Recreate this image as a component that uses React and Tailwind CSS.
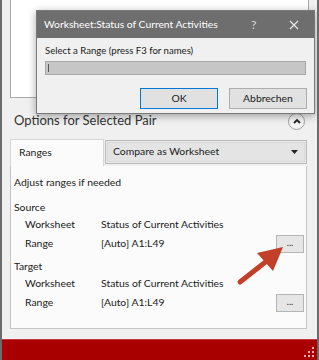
const Row = ({ label, value, button, className = "" }) => (
  <div className={`flex items-center h-[17px] pl-[11px] ${className}`}>
    <span className="w-[76px]">{label}</span>
    <span className="flex-1">{value}</span>
    {button && (
      <div className="w-[28px] h-[18px] mr-[2px] bg-[#e6e6e6] border border-[#b4b4b4] flex items-center justify-center text-[9px] leading-none pb-[3px]">
        ...
      </div>
    )}
  </div>
);

export default function App() {
  return (
    <div className="relative w-[319px] h-[360px] overflow-hidden bg-[#f0f0f0] border-l-2 border-r-2 border-[#6b6b6b] flex flex-col text-[10.4px] text-[#1a1a1a] font-['Lato','Noto_Sans',Arial,sans-serif]">
      {/* upper panel */}
      <div className="ml-[8px] mr-[8px] h-[98px] bg-white border border-t-0 border-[#a9a9a9]"></div>

      {/* options header */}
      <div className="flex items-center justify-between h-[24px] mt-[11px] ml-[12px] mr-[12px]">
        <span className="text-[13px] text-[#333]">Options for Selected Pair</span>
        <div className="w-[17px] h-[17px] rounded-full border border-[#a0a0a0] bg-[#f4f4f4] flex items-center justify-center">
          <svg width="8" height="6" viewBox="0 0 8 6">
            <path d="M1 5 L4 2 L7 5" stroke="#222" strokeWidth="1.8" fill="none" />
          </svg>
        </div>
      </div>

      {/* tabs */}
      <div className="flex items-end ml-[8px] mr-[10px] mt-[6px] h-[27px]">
        <div className="w-[94px] h-[27px] bg-[#fbfbfb] border border-b-0 border-[#d6d6d6] flex items-center pl-[8px]">
          Ranges
        </div>
        <div className="flex-1 h-[24px] mb-[2px] ml-[1px] border border-[#b9b9b9] bg-[#e9e9e9] p-[1px]">
          <div className="h-full border border-[#d8d8d8] bg-[#e4e4e4] flex items-center justify-between pl-[5px] pr-[6px]">
            <span>Compare as Worksheet</span>
            <svg width="7" height="4" viewBox="0 0 7 4">
              <path d="M0 0 H7 L3.5 4 Z" fill="#222" />
            </svg>
          </div>
        </div>
      </div>

      {/* content panel */}
      <div className="ml-[8px] mr-[10px] h-[163px] bg-[#fbfbfb] border border-t-0 border-[#c4c4c4] pt-[8px] pl-[3px]">
        <div className="h-[18px] flex items-center">Adjust ranges if needed</div>
        <div className="h-[17px] mt-[7px] flex items-center">Source</div>
        <Row label="Worksheet" value="Status of Current Activities" />
        <Row label="Range" value="[Auto] A1:L49" button className="mt-[2px]" />
        <div className="h-[17px] mt-[6px] flex items-center">Target</div>
        <Row label="Worksheet" value="Status of Current Activities" />
        <Row label="Range" value="[Auto] A1:L49" button className="mt-[2px]" />
      </div>

      {/* status bar */}
      <div className="mt-auto h-[21px] bg-[#a80000] border-t border-[#c23a3a] -mx-[2px] relative">
        <svg className="absolute right-[4px] bottom-[2px]" width="11" height="11" viewBox="0 0 11 11">
          <g fill="#f0b0b0">
            <rect x="8" y="0" width="2" height="2" />
            <rect x="4" y="4" width="2" height="2" />
            <rect x="8" y="4" width="2" height="2" />
            <rect x="0" y="8" width="2" height="2" />
            <rect x="4" y="8" width="2" height="2" />
            <rect x="8" y="8" width="2" height="2" />
          </g>
        </svg>
      </div>

      {/* dialog overlay */}
      <div className="absolute left-[34px] top-[10px] w-[279px] h-[104px] bg-[#f0f0f0] border border-[#7a7a7a] shadow-[0_2px_8px_rgba(0,0,0,0.35)] flex flex-col">
        <div className="h-[27px] bg-[#6e6e6e] flex items-center pl-[7px] text-white text-[10.3px] relative">
          <span className="whitespace-nowrap">Worksheet:Status of Current Activities</span>
          <span className="absolute left-[214px] text-[#d8d8d8] text-[12px]">?</span>
          <svg className="absolute left-[252px] top-[9px]" width="10" height="10" viewBox="0 0 10 10">
            <path d="M1 1 L9 9 M9 1 L1 9" stroke="#e8e8e8" strokeWidth="1.2" />
          </svg>
        </div>
        <div className="pl-[8px] pt-[6px] text-[9.6px] leading-[14px]">Select a Range (press F3 for names)</div>
        <div className="mx-[8px] mt-[3px] h-[14px] bg-[#c6c6c6] border border-[#a8a8a8] relative">
          <div className="absolute left-[2px] top-[2px] w-px h-[8px] bg-[#555]"></div>
        </div>
        <div className="flex justify-end gap-[11px] mr-[7px] mt-[13px]">
          <div className="w-[78px] h-[21px] bg-[#e1e1e1] border border-[#0078d7] flex items-center justify-center">OK</div>
          <div className="w-[78px] h-[21px] bg-[#e1e1e1] border border-[#adadad] flex items-center justify-center">Abbrechen</div>
        </div>
      </div>

      {/* red arrow */}
      <svg className="absolute left-[230px] top-[240px]" width="60" height="50" viewBox="0 0 60 50">
        <path d="M8 42 L36 20" stroke="#c2402a" strokeWidth="5" strokeLinecap="round" />
        <path d="M51 7 L25 13 L41 31 Z" fill="#c2402a" />
      </svg>
    </div>
  );
}
